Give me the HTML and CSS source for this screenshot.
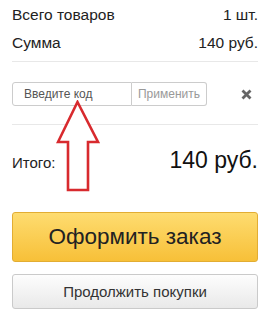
FILE: index.html
```html
<!DOCTYPE html>
<html lang="ru">
<head>
<meta charset="utf-8">
<link rel="stylesheet" href="styles.css">
</head>
<body>
<div class="cart">
  <div class="summary">
    <div class="row"><span>Всего товаров</span><span>1 шт.</span></div>
    <div class="row"><span>Сумма</span><span>140 руб.</span></div>
  </div>
  <div class="coupon-block">
    <div class="coupon">
      <input class="coupon-input" type="text" placeholder="Введите код">
      <button class="coupon-btn">Применить</button>
      <span class="close">
        <svg width="11" height="11" viewBox="0 0 11 11"><path d="M1.5 1.5 L9.5 9.5 M9.5 1.5 L1.5 9.5" stroke="#666" stroke-width="2.8" stroke-linecap="butt"/></svg>
      </span>
    </div>
  </div>
  <div class="total">
    <span class="total-label">Итого:</span>
    <span class="total-value">140 руб.</span>
  </div>
  <button class="btn-order">Оформить заказ</button>
  <button class="btn-continue">Продолжить покупки</button>
  <svg class="arrow" width="50" height="96" viewBox="56 100 50 96">
    <path d="M77.5 102 L98 142 L88 142 L88 190 L68 190 L68 142 L58 142 Z" fill="#fff" stroke="#d82a2e" stroke-width="2.6" stroke-linejoin="miter"/>
  </svg>
</div>
</body>
</html>
```
FILE: styles.css
```css
* { box-sizing: border-box; }
html, body { margin: 0; padding: 0; background: #fff; }
body { font-family: Arial, "Liberation Sans", sans-serif; color: #222; width: 270px; height: 320px; overflow: hidden; }
.cart { position: relative; padding: 1px 12px 0; }
.summary { padding-bottom: 4px; border-bottom: 1px solid #e8e8e8; }
.row { display: flex; justify-content: space-between; font-size: 15.5px; line-height: 28px; }
.coupon-block { padding: 20px 0 18px; border-bottom: 1px solid #e8e8e8; }
.coupon { display: flex; align-items: center; height: 24px; }
.coupon-input { width: 120px; height: 24px; border: 1px solid #ccc; border-radius: 3px 0 0 3px; padding: 0 0 0 11px; font: 12px Arial, "Liberation Sans", sans-serif; color: #333; outline: none; }
.coupon-input::placeholder { color: #555; }
.coupon-btn { width: 75px; height: 24px; border: 1px solid #ccc; border-left: none; border-radius: 0 3px 3px 0; background: #fff; color: #999; font: 12px Arial, "Liberation Sans", sans-serif; padding: 0; }
.close { margin-left: auto; margin-right: 6px; display: flex; }
.total { display: flex; justify-content: space-between; align-items: baseline; padding-top: 22px; }
.total-label { font-size: 15px; }
.total-value { font-size: 23px; line-height: 26px; color: #111; }
.btn-order { display: block; width: 100%; height: 50px; margin-top: 39px; border: 1px solid #e2ad33; border-radius: 3px; background: linear-gradient(#fedc70, #f7c038); font: 22.5px Arial, "Liberation Sans", sans-serif; color: #222; padding: 0; }
.btn-continue { display: block; width: 100%; height: 35px; margin-top: 12px; border: 1px solid #cacaca; border-radius: 3px; background: linear-gradient(#fdfdfd, #e9e9e9); font: 15px Arial, "Liberation Sans", sans-serif; color: #333; padding: 0; }
.arrow { position: absolute; left: 56px; top: 100px; }
```
